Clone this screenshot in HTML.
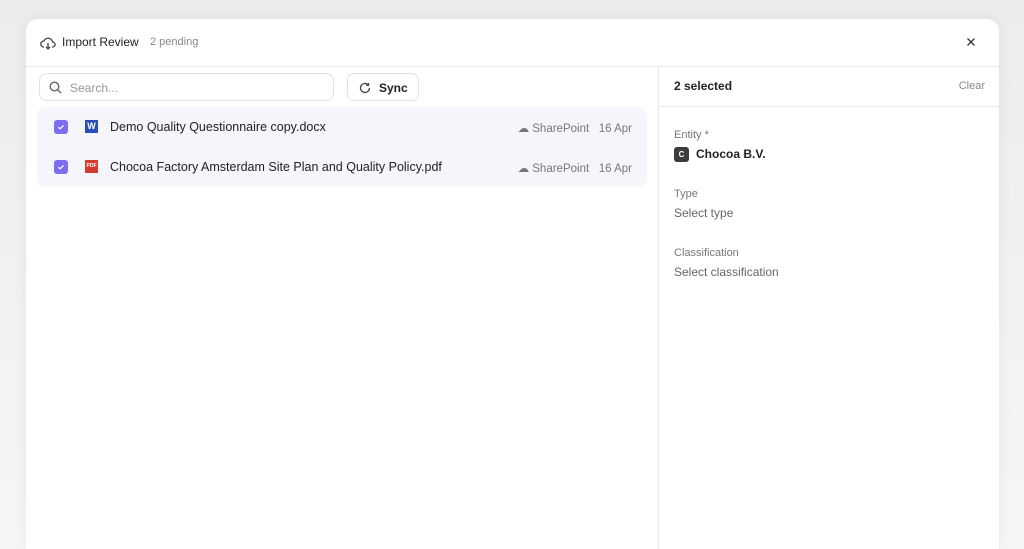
<!DOCTYPE html>
<html><head><style>
*{box-sizing:border-box;margin:0;padding:0}
html,body{width:1024px;height:549px;overflow:hidden}
body{background:linear-gradient(#ececec,#f6f6f6);font-family:"Liberation Sans",sans-serif;position:relative}
.modal{position:absolute;left:26px;top:19px;width:973px;height:530px;background:#fff;border-radius:12px 12px 0 0;box-shadow:0 0 14px rgba(0,0,0,.06)}
.hdr{height:48px;border-bottom:1px solid #e8e8ea;position:relative}
.t{position:absolute;top:16px;font-size:12px}
.left{position:absolute;left:0;top:48px;width:632px;bottom:0}
.right{position:absolute;left:632px;top:48px;right:0;bottom:0;border-left:1px solid #e8e8ea}
.search{position:absolute;left:13px;top:6px;width:295px;height:28px;border:1px solid #e2e2e5;border-radius:8px}
.sync{position:absolute;left:321px;top:6px;width:72px;height:28px;border:1px solid #e2e2e5;border-radius:7px}
.list{position:absolute;left:11px;top:40px;width:610px;height:80px;background:#f5f5fb;border-radius:8px}
.row{position:absolute;left:0;width:100%;height:40px;font-size:12.5px;color:#222;white-space:nowrap}
.cb{position:absolute;left:17px;top:13px;width:14px;height:14px;background:#7b6ef0;border-radius:3px}
.lbl{color:#777;font-size:11px}
.meta{position:absolute;right:15px;top:14px;font-size:11.5px;color:#777;white-space:nowrap}
</style></head><body>
<div class="modal">
 <div class="hdr">
  <svg style="position:absolute;left:14px;top:17px" width="16" height="14" viewBox="0 0 16 14" fill="none" stroke="#444" stroke-width="1.3"><path d="M4 11H3.5A3 3 0 0 1 4 5a4.5 4.5 0 0 1 8.6 1A2.5 2.5 0 0 1 12.5 11H12"/><path d="M8 7v6M6 11l2 2 2-2"/></svg>
  <span class="t" style="left:36px;color:#222">Import Review</span>
  <span class="t" style="left:124px;color:#888;font-size:11px;top:17px">2 pending</span>
  <svg style="position:absolute;left:941px;top:19px" width="8" height="8" viewBox="0 0 8 8" stroke="#333" stroke-width="1.3"><path d="M0.5 0.5l7 7M7.5 0.5l-7 7"/></svg>
 </div>
 <div class="left">
  <div class="search"><svg style="position:absolute;left:9px;top:7px" width="13" height="13" viewBox="0 0 13 13" fill="none" stroke="#666" stroke-width="1.4"><circle cx="5.5" cy="5.5" r="4.3"/><path d="M8.7 8.7l3.3 3.3"/></svg><span style="position:absolute;left:30px;top:7px;font-size:12px;color:#999">Search...</span></div>
  <div class="sync"><svg style="position:absolute;left:11px;top:8px" width="12" height="12" viewBox="0 0 12 12" fill="none" stroke="#444" stroke-width="1.3"><path d="M10.5 6A4.5 4.5 0 1 1 9 2.6"/><path d="M9.5 1v2.3H7.2"/></svg><span style="position:absolute;left:31px;top:7px;font-size:12px;font-weight:bold;color:#222">Sync</span></div>
  <div class="list">
   <div class="row" style="top:0"><div class="cb"><svg width="14" height="14" viewBox="0 0 14 14" fill="none" stroke="#fff" stroke-width="1.2"><path d="M4.5 7.2l1.7 1.6 3.3-3.4"/></svg></div><div style="position:absolute;left:48px;top:13px;width:13px;height:13px;background:#2b4fb8;color:#fff;font-size:9px;font-weight:bold;text-align:center;line-height:13px">W</div><span style="position:absolute;left:73px;top:13px">Demo Quality Questionnaire copy.docx</span><span class="meta">☁ SharePoint &nbsp;&nbsp;16 Apr</span></div>
   <div class="row" style="top:40px"><div class="cb"><svg width="14" height="14" viewBox="0 0 14 14" fill="none" stroke="#fff" stroke-width="1.2"><path d="M4.5 7.2l1.7 1.6 3.3-3.4"/></svg></div><div style="position:absolute;left:48px;top:13px;width:13px;height:13px;background:#d63b30;color:#fff;font-size:5px;font-weight:bold;text-align:center;line-height:13px">PDF</div><span style="position:absolute;left:73px;top:13px">Chocoa Factory Amsterdam Site Plan and Quality Policy.pdf</span><span class="meta">☁ SharePoint &nbsp;&nbsp;16 Apr</span></div>
  </div>
 </div>
 <div class="right">
  <div style="height:40px;border-bottom:1px solid #e8e8ea;position:relative"><span style="position:absolute;left:15px;top:12px;font-size:12px;font-weight:bold;color:#222">2 selected</span><span style="position:absolute;right:14px;top:13px;font-size:11px;color:#888">Clear</span></div>
  <span class="lbl" style="position:absolute;left:15px;top:62px">Entity *</span>
  <div style="position:absolute;left:15px;top:80px;width:15px;height:15px;background:#3c3c3c;border-radius:3px;color:#fff;font-size:8px;font-weight:bold;text-align:center;line-height:15px">C</div>
  <span style="position:absolute;left:37px;top:80px;font-size:12px;font-weight:bold;color:#222">Chocoa B.V.</span>
  <span class="lbl" style="position:absolute;left:15px;top:121px">Type</span>
  <span style="position:absolute;left:15px;top:139px;font-size:12px;color:#666">Select type</span>
  <span class="lbl" style="position:absolute;left:15px;top:180px">Classification</span>
  <span style="position:absolute;left:15px;top:198px;font-size:12px;color:#666">Select classification</span>
 </div>
</div>
</body></html>
